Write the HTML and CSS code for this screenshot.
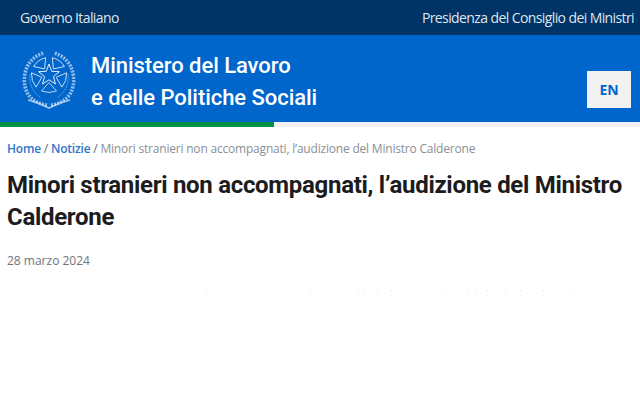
FILE: index.html
```html
<!DOCTYPE html>
<html lang="it">
  <head>
    <meta charset="UTF-8" />
    <title>Minori stranieri non accompagnati</title>
    <link rel="stylesheet" href="styles.css">
  </head>
  <body>
    <div class="topbar">
      <a href="#">Governo Italiano</a>
      <a href="#">Presidenza del Consiglio dei Ministri</a>
    </div>
    <header class="header">
      <svg class="emblem" viewBox="0 0 54 60" fill="none" stroke="#e3edf9">
        <defs>
          <path id="seg" d="M27 32.5L34.5 41Q27 44 19.5 41Z"/>
        </defs>
        <!-- wreath -->
        <path d="M25 55C8 53 1 40 2.500 27C3.500 15 11 6 22 3" stroke-width="3.6" stroke-dasharray="2 1.2" opacity=".65"/>
        <path d="M29 55C46 53 53 40 51.500 27C50.500 15 43 6 32 3" stroke-width="3.6" stroke-dasharray="2 1.2" opacity=".65"/>
        <path d="M6 50L16 53L27 58L38 53L48 50" stroke-width="1.6" opacity=".7"/>
        <path d="M8 24C7 34 11 43 19 48M46 24C47 34 43 43 35 48" stroke-width=".8" stroke-dasharray="1.5 1" opacity=".6"/>
        <!-- cog segments -->
        <g stroke-width=".9" opacity=".9">
          <use href="#seg"/>
          <use href="#seg" transform="rotate(72 27 25)"/>
          <use href="#seg" transform="rotate(144 27 25)"/>
          <use href="#seg" transform="rotate(216 27 25)"/>
          <use href="#seg" transform="rotate(288 27 25)"/>
        </g>
        <!-- star -->
        <path d="M27 14L29.7 21.3L37.5 21.7L31.4 26.5L33.5 34L27 29.8L20.5 34L22.6 26.5L16.5 21.7L24.3 21.3Z" stroke-width="1"/>
      </svg>
      <div class="brand">Ministero del Lavoro<br>e delle Politiche Sociali</div>
      <a class="lang" href="#">EN</a>
    </header>
    <div class="progress"><div class="progress-fill"></div></div>
    <main class="content">
      <nav class="breadcrumb">
        <a href="#">Home</a> <span class="sep">/</span> <a href="#">Notizie</a> <span class="sep">/</span> Minori stranieri non accompagnati, l’audizione del Ministro Calderone
      </nav>
      <h1>Minori stranieri non accompagnati, l’audizione del Ministro Calderone</h1>
      <p class="date">28 marzo 2024</p>
      <!-- tops of the next text line, cut off in the reference -->
      <svg class="cut-line" viewBox="0 0 640 1" fill="#dcdcdc">
        <rect x="206" width="1" height="1"/>
        <rect x="310" width="1" height="1"/>
        <rect x="358" width="1" height="1"/>
        <rect x="363" width="1" height="1"/>
        <rect x="377" width="1" height="1"/>
        <rect x="391" width="1" height="1"/>
        <rect x="442" width="1" height="1"/>
        <rect x="468" width="1" height="1"/>
        <rect x="475" width="1" height="1"/>
        <rect x="487" width="1" height="1"/>
        <rect x="505" width="1" height="1"/>
        <rect x="520" width="1" height="1"/>
        <rect x="543" width="1" height="1"/>
        <rect x="573" width="1" height="1"/>
      </svg>
    </main>
  </body>
</html>
```

FILE: styles.css
```css
* {
  box-sizing: border-box;
}
html, body {
  height: 100%;
}
body {
  margin: 0;
  background: #fff;
  font-family: 'Open Sans', 'Noto Sans', sans-serif;
  overflow: hidden;
}
a {
  text-decoration: none;
}
.topbar {
  height: 35px;
  padding: 0 6px 0 20px;
  background: #003366;
  display: flex;
  align-items: center;
  justify-content: space-between;
}
.topbar a {
  color: #dfe6ee;
  font-size: 14px;
  letter-spacing: -0.6px;
}
.header {
  height: 87px;
  padding: 0 9px 0 22px;
  background: #0066cc;
  display: flex;
  align-items: center;
}
.emblem {
  width: 54px;
  height: 60px;
  flex: none;
  margin-top: 3px;
}
.brand {
  margin: 6px 0 0 15px;
  color: #fff;
  font-family: Roboto, sans-serif;
  font-size: 22px;
  font-weight: 500;
  line-height: 32px;
  letter-spacing: -0.05px;
}
.lang {
  margin: 21px 0 0 auto;
  width: 44px;
  height: 37px;
  background: #f2f2f2;
  color: #0066cc;
  font-size: 14px;
  font-weight: 700;
  display: flex;
  align-items: center;
  justify-content: center;
}
.progress {
  height: 5px;
  background: #f2f2f2;
}
.progress-fill {
  width: 274px;
  height: 100%;
  background: #009246;
}
.content {
  padding: 12px 7px 0;
}
.breadcrumb {
  color: #8a8f96;
  font-size: 12px;
  line-height: 20px;
  letter-spacing: -0.2px;
}
.breadcrumb a {
  color: #2f74c9;
  font-weight: 600;
}
.sep {
  color: #5f6a75;
}
h1 {
  margin: 10px 0 0;
  color: #1c1c1e;
  font-family: Roboto, sans-serif;
  font-size: 24px;
  font-weight: 700;
  line-height: 32px;
  letter-spacing: -0.3px;
}
.date {
  margin: 18px 0 0;
  color: #70757c;
  font-size: 12px;
  line-height: 20px;
}
.cut-line {
  display: block;
  width: 640px;
  height: 1px;
  margin: 19px 0 0 -7px;
}
```
